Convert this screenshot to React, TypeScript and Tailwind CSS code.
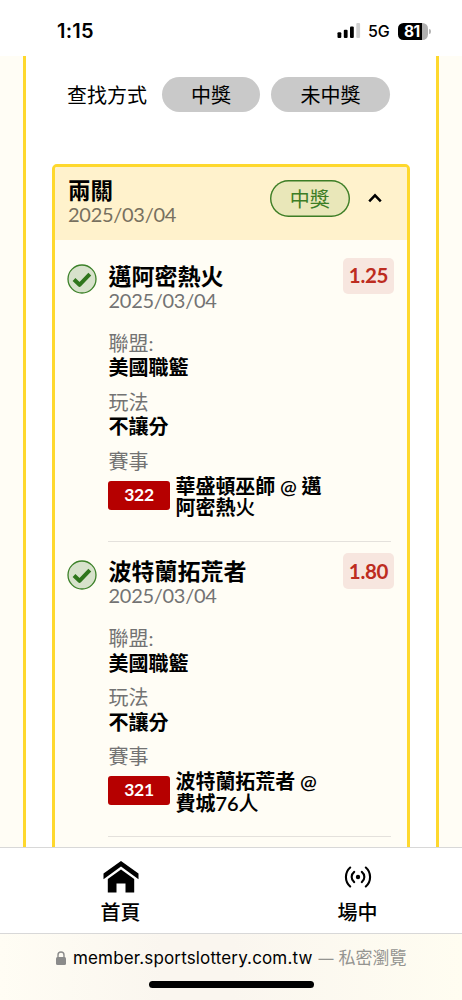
import React from "react";

type Bet = { team: string; odds: string; code: string; match: [React.ReactNode, React.ReactNode] };

const bets: Bet[] = [
  {
    team: "邁阿密熱火",
    odds: "1.25",
    code: "322",
    match: [
      <>華盛頓巫師 <span className="font-semibold">@</span> 邁</>,
      <>阿密熱<span className="font-medium">火</span></>,
    ],
  },
  {
    team: "波特蘭拓荒者",
    odds: "1.80",
    code: "321",
    match: [
      <>波特蘭拓荒者 <span className="font-semibold">@</span></>,
      <>費城<span className="font-semibold">76</span><span className="font-medium">人</span></>,
    ],
  },
];

function StatusBar() {
  return (
    <header className="flex h-14 shrink-0 items-start justify-between bg-white pl-[57px] pr-[31px] font-['Inter',sans-serif]">
      <span className="mt-[17px] text-[20px] leading-7 font-semibold tracking-[0.2px]">1:15</span>
      <div className="mt-[17px] flex h-7 items-center">
        <svg width="24" height="16" viewBox="0 0 24 16" className="mr-[7px]">
          <rect x="0.5" y="9.2" width="3.8" height="5.8" rx="1.1" />
          <rect x="6.8" y="6.7" width="3.8" height="8.3" rx="1.1" />
          <rect x="13" y="3.5" width="3.8" height="11.5" rx="1.1" />
          <rect x="19.3" y="0" width="3.8" height="15" rx="1.1" fill="#d0d0d0" />
        </svg>
        <span className="w-[22px] text-[16px] leading-7 font-medium tracking-[-0.2px]">5G</span>
        <div className="ml-2 flex h-[17px] w-[30px] items-center overflow-hidden rounded-[5.5px] bg-[linear-gradient(90deg,#000_81%,#b0b0b0_81%)]">
          <span className="pt-px pl-[6px] text-[15.5px] leading-4 font-bold tracking-[-0.6px] text-white">81</span>
        </div>
        <span className="ml-[1px] h-[5px] w-[2px] rounded-r-full bg-[#b5b5b5]" />
      </div>
    </header>
  );
}

function BetItem({ bet }: { bet: Bet }) {
  return (
    <section className="flex h-[295.5px] pr-[13px] pl-[12px]">
      <svg width="30" height="30" viewBox="0 0 30 30" className="mt-[18px] shrink-0" fill="none">
        <circle cx="15" cy="15" r="14" fill="#d7e2cb" stroke="#3c8129" strokeWidth="1.3" />
        <path d="M7 15.5 12.5 20.8 22.8 10.2" stroke="#2f761c" strokeWidth="4" strokeLinejoin="round" />
      </svg>
      <div className="ml-[11px] flex min-w-0 flex-1 flex-col">
        <div className="flex h-[84.5px] justify-between">
          <div className="pt-[17.5px] pl-[0.5px]">
            <h2 className="text-[23px] leading-6 font-bold">{bet.team}</h2>
            <p className="text-[20px] leading-[24px] tracking-[-0.28px] text-[#737373]">2025/03/04</p>
          </div>
          <div className="mt-[11.5px] flex h-9 w-[51px] items-center justify-center rounded-[5px] bg-[#f7e6df] text-[20.5px] font-bold tracking-[-0.3px] text-[#bd2c20]">
            {bet.odds}
          </div>
        </div>
        <dl className="pl-[0.5px] text-[20px] leading-[24.5px]">
          <dt className="text-[#737373]">聯盟:</dt>
          <dd className="mb-[10px] font-bold">美國職籃</dd>
          <dt className="text-[#737373]">玩法</dt>
          <dd className="mb-[10px] font-bold">不讓分</dd>
          <dt className="text-[#737373]">賽事</dt>
        </dl>
        <div className="mt-[1.5px] flex">
          <span className="mt-[6px] flex h-[29px] w-[62px] items-center justify-center rounded-[3px] bg-[#b60000] text-[17.5px] font-bold tracking-[-0.3px] text-white">
            {bet.code}
          </span>
          <div className="mt-px ml-[5.5px] text-[20px] leading-[21.5px] font-bold tracking-[-0.05px] whitespace-nowrap">
            <p>{bet.match[0]}</p>
            <p>{bet.match[1]}</p>
          </div>
        </div>
        <hr className="mt-auto mr-[3px] border-[#e4e1dc]" />
      </div>
    </section>
  );
}

export default function App() {
  return (
    <div className="flex h-[1000px] w-full max-w-[462px] flex-col overflow-hidden bg-white font-['Lato','Noto_Sans_CJK_TC',sans-serif] text-black">
      <StatusBar />
      <main className="min-h-0 flex-1 overflow-hidden bg-[#fffdf5] px-[23px]">
        <div className="h-[900px] border-x-3 border-[#fed82d] bg-white px-[26px] pt-[21px]">
          <div className="flex h-[35px] items-center pl-[15px] text-[20px]">
            <span className="w-[95px]">查找方式</span>
            <button className="h-[35px] w-[98px] rounded-full bg-[#c9c9c9]">中獎</button>
            <button className="ml-[11px] h-[35px] w-[119px] rounded-full bg-[#c9c9c9]">未中獎</button>
          </div>
          <article className="mt-[52px] h-[900px] overflow-hidden rounded-[5px] border-3 border-[#fed82d] bg-[#fffdf5]">
            <div className="flex h-[73px] bg-[#fff2cc] pl-[13px]">
              <div className="w-[202px] pt-3">
                <h1 className="text-[22.5px] leading-6 font-bold">兩關</h1>
                <p className="text-[20px] leading-[23.5px] tracking-[-0.28px] text-[#77705f]">2025/03/04</p>
              </div>
              <div className="mt-[13px] flex h-[37px] w-[79.5px] items-center justify-center rounded-full bg-[#e9e7b9] text-[20px] text-[#3c7d25] shadow-[inset_0_0_0_1.4px_#3c7d25]">
                中獎
              </div>
              <svg width="14" height="10" viewBox="0 0 14 10" className="mt-[25.5px] ml-[18.5px]" fill="none">
                <path d="M1.2 8.4 7 2.4 12.8 8.4" stroke="#000" strokeWidth="2.5" />
              </svg>
            </div>
            <div className="pt-[6px]">
              {bets.map((bet) => (
                <BetItem key={bet.code} bet={bet} />
              ))}
            </div>
          </article>
        </div>
      </main>
      <nav className="flex h-[87px] shrink-0 border-y border-[#d8d8d8] bg-white pl-[2px] text-[20px] leading-6 font-medium">
        <a className="flex w-[237px] shrink-0 flex-col items-center">
          <svg width="36" height="32" viewBox="0 0 36 32" className="mt-[13px]">
            <path d="M18 0 35.5 12.5V18.3L18 5.6 .5 18.3V12.5Z" />
            <path d="M18 8.4 31.2 18V31.5H22.5V22.5H13.5V31.5H4.8V18Z" />
          </svg>
          <span className="mt-[7px]">首頁</span>
        </a>
        <a className="flex w-[237px] shrink-0 flex-col items-center">
          <svg width="28" height="22" viewBox="0 0 28 22" className="mt-[18px]" fill="none" stroke="#000" strokeWidth="2.1" strokeLinecap="round">
            <circle cx="14" cy="11" r="2.2" fill="#000" stroke="none" />
            <path d="M10.2 5.8C6.8 8.4 6.8 13.6 10.2 16.2M17.8 5.8C21.2 8.4 21.2 13.6 17.8 16.2M6.2 1.5C.5 6.5.5 15.5 6.2 20.5M21.8 1.5C27.5 6.5 27.5 15.5 21.8 20.5" />
          </svg>
          <span className="mt-3">場中</span>
        </a>
      </nav>
      <footer className="flex h-[66px] shrink-0 flex-col items-center bg-[linear-gradient(90deg,#fffdf4,#faf6ef_35%,#faf6ef_50%,#fffdf1)] font-['Inter','Noto_Sans_CJK_TC',sans-serif]">
        <div className="mt-3 flex h-6 w-[352px] items-center text-[17px] whitespace-nowrap">
          <svg width="12" height="14" viewBox="0 0 12 14" className="mr-[6px] shrink-0">
            <rect x="1" y="6" width="10" height="8" rx="1.5" fill="#8b8b8b" />
            <path d="M3 7V4a3 3 0 0 1 6 0V7" fill="none" stroke="#8b8b8b" strokeWidth="1.4" />
          </svg>
          <span className="pt-px tracking-[0.15px]">member.sportslottery.com.tw</span>
          <span className="ml-[6px] pt-px text-[#949490]">
            <span className="inline-block w-[20px] text-[15px]">—</span>
            私密瀏覽
          </span>
        </div>
        <div className="mt-[11px] h-[7px] w-[165px] rounded-full bg-black" />
      </footer>
    </div>
  );
}
